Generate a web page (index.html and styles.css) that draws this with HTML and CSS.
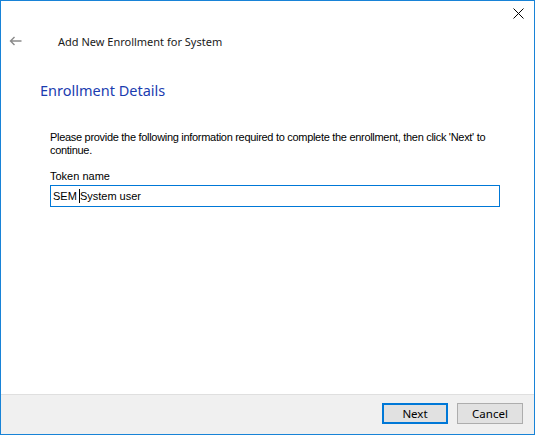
FILE: index.html
```html
<!DOCTYPE html>
<html>
<head>
<meta charset="utf-8">
<link rel="stylesheet" href="styles.css">
</head>
<body>
<div class="window">
  <div class="titlebar">
    <span class="close" aria-label="Close">
      <svg width="11" height="11" viewBox="0 0 11 11"><path d="M0.5 0.5 L10.5 10.5 M10.5 0.5 L0.5 10.5" stroke="#000" stroke-width="1" fill="none"/></svg>
    </span>
  </div>
  <div class="header">
    <span class="back">
      <svg width="13" height="10" viewBox="0 0 13 10"><path d="M12.5 5 H1.5 M5.5 1 L1.5 5 L5.5 9" stroke="#8a8a8a" stroke-width="1.4" fill="none"/></svg>
    </span>
    <span class="title">Add New Enrollment for System</span>
  </div>
  <div class="main">
    <h1 class="heading">Enrollment Details</h1>
    <div class="body">
      <p class="intro">Please provide the following information required to complete the enrollment, then click 'Next' to continue.</p>
      <label class="label">Token name</label>
      <div class="field">
        <span class="value">SEM System user</span>
        <span class="ibeam"></span>
      </div>
    </div>
  </div>
  <div class="footer">
    <button class="btn primary">Next</button>
    <button class="btn">Cancel</button>
  </div>
</div>
</body>
</html>
```

FILE: styles.css
```css
html, body {
  margin: 0;
  padding: 0;
  background: #fff;
}
.window {
  width: 535px;
  height: 435px;
  box-sizing: border-box;
  border: 1px solid #1883d7;
  display: flex;
  flex-direction: column;
  background: #fff;
}
.titlebar {
  height: 27px;
  display: flex;
  justify-content: flex-end;
  align-items: flex-start;
}
.close {
  display: block;
  width: 11px;
  height: 11px;
  margin: 7px 10px 0 0;
}
.close svg { display: block; }
.header {
  display: flex;
  align-items: center;
  height: 26px;
}
.back {
  display: block;
  width: 13px;
  height: 10px;
  margin-left: 8px;
  margin-top: -1px;
}
.back svg { display: block; }
.title {
  margin-left: 36px;
  font-family: "Noto Sans", sans-serif;
  font-size: 11px;
  color: #1a1a1a;
}
.main {
  flex: 1;
  padding: 0 0 0 39px;
}
.heading {
  margin: 26px 0 0 0;
  font-family: "Noto Sans", sans-serif;
  font-weight: normal;
  font-size: 14.5px;
  line-height: 20px;
  color: #1a3cb0;
}
.body {
  margin: 31px 0 0 10px;
  width: 450px;
  font-family: "Liberation Sans", Arial, sans-serif;
  font-size: 11px;
  color: #000;
}
.intro {
  margin: 0;
  line-height: 13px;
  letter-spacing: -0.3px;
}
.label {
  display: block;
  margin-top: 13px;
  line-height: 13px;
}
.field {
  position: relative;
  margin-top: 2px;
  box-sizing: border-box;
  width: 450px;
  height: 22px;
  border: 1px solid #0078d7;
  display: flex;
  align-items: center;
  padding-left: 2px;
}
.ibeam {
  position: absolute;
  left: 28px;
  top: 3px;
  width: 1px;
  height: 14px;
  background: #000;
}
.footer {
  height: 40px;
  box-sizing: border-box;
  border-top: 1px solid #dfdfdf;
  background: #f0f0f0;
  display: flex;
  justify-content: flex-end;
  align-items: flex-start;
  gap: 9px;
  padding: 8px 11px 0 0;
}
.btn {
  width: 66px;
  height: 21px;
  box-sizing: border-box;
  margin: 0;
  padding: 0;
  background: #e1e1e1;
  border: 1px solid #adadad;
  font-family: "Noto Sans", sans-serif;
  font-size: 11.5px;
  color: #000;
}
.btn.primary {
  border: 2px solid #0078d7;
}
```
